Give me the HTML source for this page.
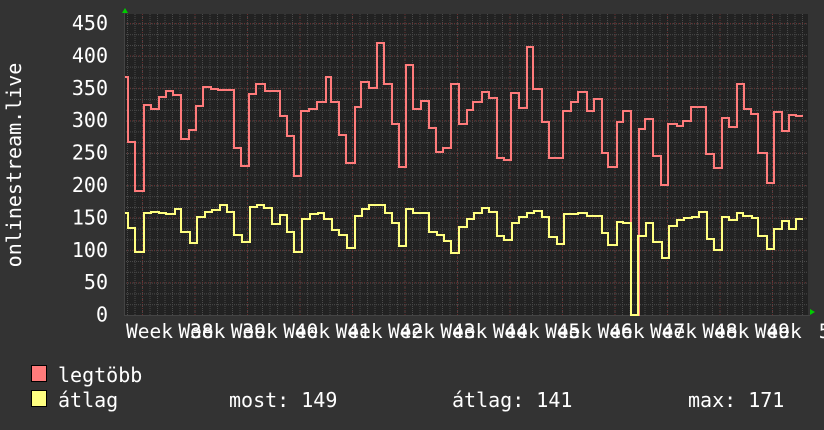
<!DOCTYPE html>
<html><head><meta charset="utf-8"><style>
html,body{margin:0;padding:0;background:#333333;width:824px;height:430px;overflow:hidden}
text{font-family:"DejaVu Sans Mono","Liberation Mono",monospace;fill:#ffffff}
</style></head><body>
<svg width="824" height="430" xmlns="http://www.w3.org/2000/svg">
<defs>
<pattern id="hg" patternUnits="userSpaceOnUse" x="124" y="315" width="2" height="10.8"><rect x="0" y="0" width="1" height="1" fill="#4a4a4a"/></pattern>
<pattern id="vg" patternUnits="userSpaceOnUse" x="142" y="14" width="7.5" height="2"><rect x="0" y="0" width="1" height="1" fill="#4a4a4a"/></pattern>
</defs>
<rect x="124" y="14" width="684" height="301" fill="#222222"/>
<rect x="124" y="14" width="684" height="301" fill="url(#hg)"/>
<rect x="124" y="14" width="684" height="301" fill="url(#vg)"/>
<g stroke="#6a2e2e" stroke-width="1" stroke-dasharray="1,2">
<line x1="124" x2="808" y1="23.5" y2="23.5"/><line x1="124" x2="808" y1="55.9" y2="55.9"/><line x1="124" x2="808" y1="88.3" y2="88.3"/><line x1="124" x2="808" y1="120.7" y2="120.7"/><line x1="124" x2="808" y1="153.1" y2="153.1"/><line x1="124" x2="808" y1="185.5" y2="185.5"/><line x1="124" x2="808" y1="217.9" y2="217.9"/><line x1="124" x2="808" y1="250.3" y2="250.3"/><line x1="124" x2="808" y1="282.7" y2="282.7"/>
<line y1="14" y2="315" x1="142.5" x2="142.5"/><line y1="14" y2="315" x1="195" x2="195"/><line y1="14" y2="315" x1="247.5" x2="247.5"/><line y1="14" y2="315" x1="300" x2="300"/><line y1="14" y2="315" x1="352.5" x2="352.5"/><line y1="14" y2="315" x1="405" x2="405"/><line y1="14" y2="315" x1="457.5" x2="457.5"/><line y1="14" y2="315" x1="510" x2="510"/><line y1="14" y2="315" x1="562.5" x2="562.5"/><line y1="14" y2="315" x1="615" x2="615"/><line y1="14" y2="315" x1="667.5" x2="667.5"/><line y1="14" y2="315" x1="720" x2="720"/><line y1="14" y2="315" x1="772.5" x2="772.5"/>
</g>
<line x1="124" x2="810" y1="315.5" y2="315.5" stroke="#444" stroke-width="1"/>
<line x1="124.5" x2="124.5" y1="12" y2="315" stroke="#444" stroke-width="1"/>
<polygon points="122,13 128,13 125,8" fill="#00cc00"/>
<polygon points="810,309 810,315 815,312" fill="#00cc00"/>
<path fill="none" stroke="#ff7b7b" stroke-width="2" d="M125 77 H128 V142 H135 V191 H144 V105 H151 V109 H159 V97 H166 V91 H173 V95 H181 V139 H189 V130 H196 V106 H203 V87 H211 V89 H218 V90 H234 V148 H241 V166 H249 V94 H256 V84 H265 V91 H280 V116 H287 V136 H294 V176 H301 V111 H309 V109 H317 V102 H326 V77 H331 V102 H339 V135 H346 V163 H355 V107 H361 V82 H369 V88 H377 V43 H384 V84 H392 V124 H399 V167 H406 V65 H413 V109 H421 V101 H429 V128 H436 V152 H443 V148 H451 V84 H459 V124 H467 V110 H473 V102 H482 V92 H489 V98 H497 V158 H504 V160 H511 V93 H519 V108 H527 V47 H533 V89 H542 V122 H549 V158 H563 V111 H571 V102 H578 V92 H587 V111 H594 V99 H602 V153 H608 V167 H617 V122 H623 V111 H631 V315 H639 V129 H645 V119 H653 V156 H661 V185 H668 V124 H677 V126 H683 V121 H691 V107 H706 V154 H714 V168 H722 V118 H729 V127 H737 V84 H744 V109 H751 V114 H758 V153 H767 V183 H774 V112 H782 V131 H789 V115 H796 V116 H803"/>
<path fill="none" stroke="#ffff80" stroke-width="2" d="M125 213 H128 V228 H135 V252 H144 V213 H151 V212 H159 V213 H166 V214 H175 V209 H181 V232 H190 V243 H197 V217 H205 V212 H212 V210 H220 V205 H227 V212 H234 V235 H242 V242 H250 V207 H257 V205 H264 V208 H272 V224 H280 V215 H287 V232 H294 V252 H302 V219 H310 V214 H318 V213 H324 V219 H332 V230 H339 V235 H347 V248 H355 V216 H362 V209 H369 V205 H377 V205 H385 V213 H392 V223 H399 V246 H406 V209 H413 V213 H422 V213 H429 V232 H437 V235 H444 V241 H451 V253 H459 V227 H467 V219 H474 V213 H482 V208 H489 V212 H497 V236 H504 V240 H512 V223 H519 V217 H527 V213 H534 V211 H542 V217 H549 V237 H557 V244 H564 V214 H578 V213 H587 V216 H602 V233 H608 V245 H617 V222 H623 V223 H631 V315 H638 V236 H646 V223 H653 V242 H662 V258 H669 V226 H677 V220 H684 V218 H692 V217 H699 V212 H707 V239 H714 V250 H722 V217 H729 V220 H737 V213 H743 V216 H752 V218 H758 V236 H767 V249 H774 V229 H782 V221 H789 V229 H796 V219 H803"/>
<g font-size="20" text-anchor="end">
<text x="108" y="30">450</text><text x="108" y="62.4">400</text><text x="108" y="94.8">350</text><text x="108" y="127.2">300</text><text x="108" y="159.6">250</text><text x="108" y="192">200</text><text x="108" y="224.4">150</text><text x="108" y="256.8">100</text><text x="108" y="289.2">50</text><text x="108" y="321.6">0</text>
</g>
<text font-size="20" transform="translate(21,165) rotate(-90)" text-anchor="middle">onlinestream.live</text>
<g font-size="19.5">
<text x="126" y="338">Week</text><text x="178.4" y="338">Week</text><text x="230.8" y="338">Week</text><text x="283.2" y="338">Week</text><text x="335.6" y="338">Week</text><text x="388" y="338">Week</text><text x="440.4" y="338">Week</text><text x="492.8" y="338">Week</text><text x="545.2" y="338">Week</text><text x="597.6" y="338">Week</text><text x="650" y="338">Week</text><text x="702.4" y="338">Week</text><text x="754.8" y="338">Week</text>
<text x="190" y="338">38</text><text x="242.4" y="338">39</text><text x="294.8" y="338">40</text><text x="347.2" y="338">41</text><text x="399.6" y="338">42</text><text x="452" y="338">43</text><text x="504.4" y="338">44</text><text x="556.8" y="338">45</text><text x="609.2" y="338">46</text><text x="661.6" y="338">47</text><text x="714" y="338">48</text><text x="766.4" y="338">49</text><text x="818.8" y="338">50</text>
</g>
<rect x="31.5" y="365.5" width="15" height="16" fill="#ff7b7b" stroke="#000" stroke-width="1"/>
<rect x="31.5" y="390.5" width="15" height="16" fill="#ffff80" stroke="#000" stroke-width="1"/>
<g font-size="20">
<text x="58" y="382">legtöbb</text>
<text x="58" y="407">átlag</text>
<text x="229" y="407">most: 149</text>
<text x="452" y="407">átlag: 141</text>
<text x="688" y="407">max: 171</text>
</g>
</svg>
</body></html>
